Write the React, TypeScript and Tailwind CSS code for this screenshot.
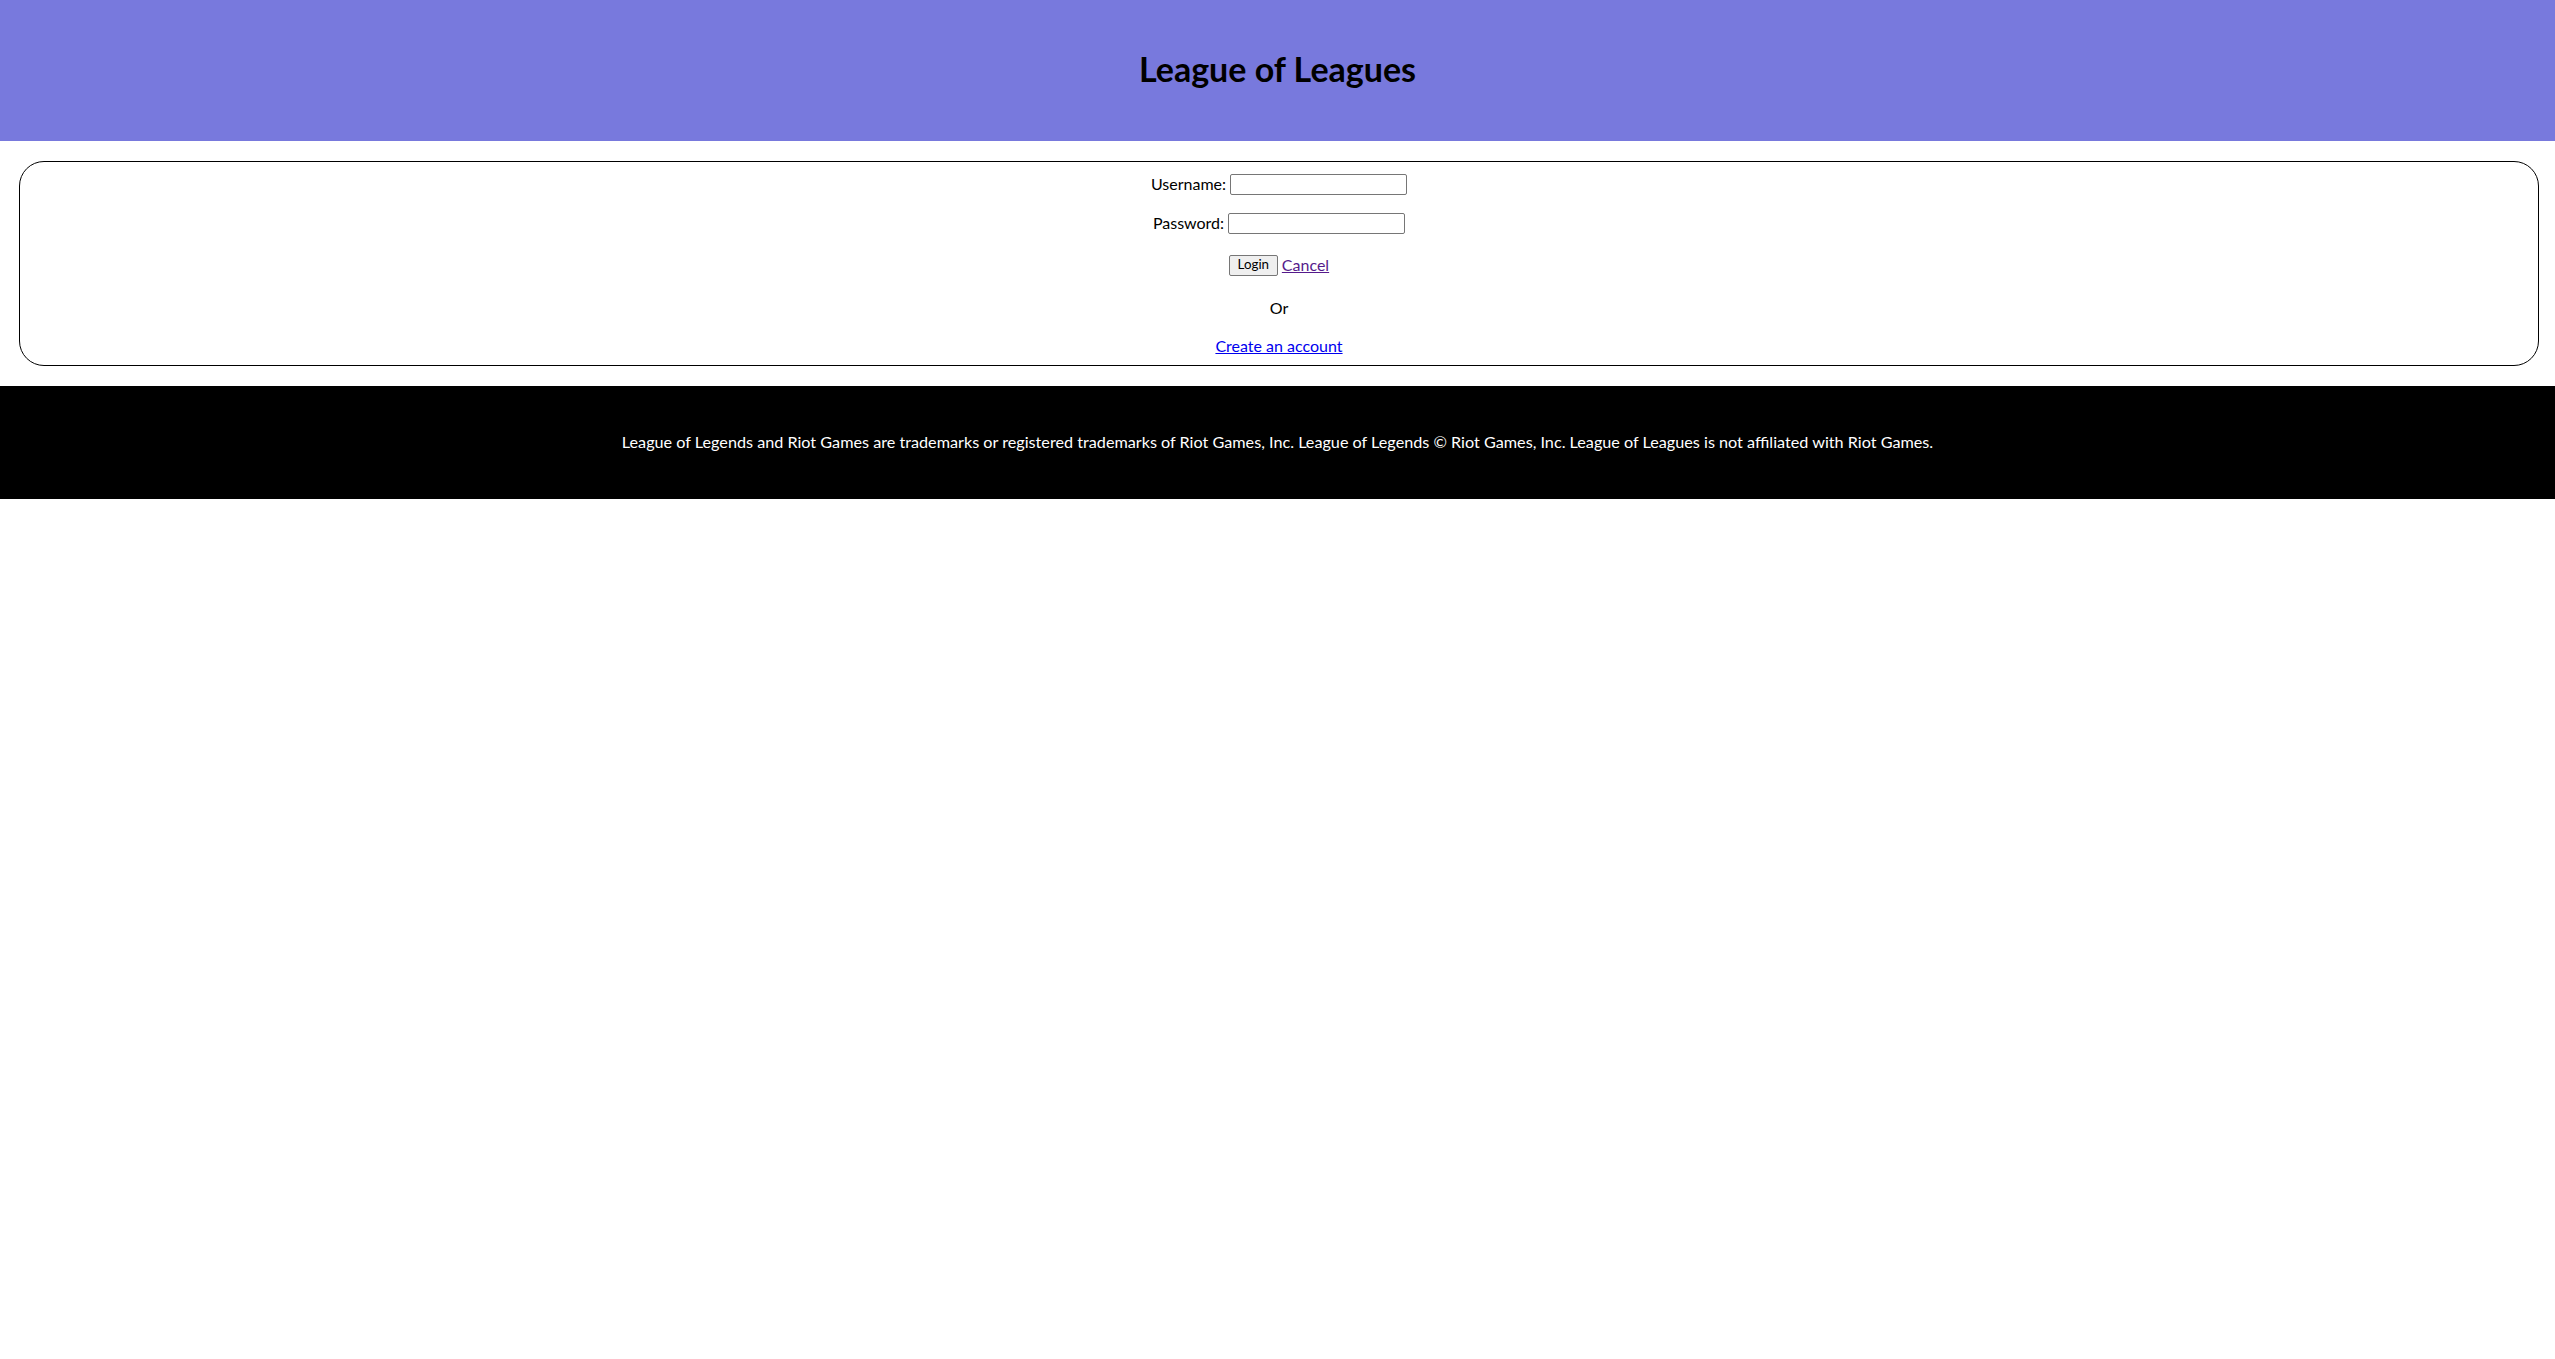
export default function App() {
  return (
    <div className="min-h-screen bg-white text-black" style={{ fontFamily: 'Lato, "Noto Sans", sans-serif' }}>
      <header className="flex h-[141px] items-center justify-center bg-[#7879dd] pb-[3px]">
        <h1 className="text-[34px] font-bold leading-none">League of Leagues</h1>
      </header>

      <main className="ml-[19px] mr-[16px] mt-[20px] rounded-[25px] border border-black pt-[11px] pb-[8px] text-[16px]">
        <div className="flex h-[22px] items-center justify-center gap-[4px]">
          <label htmlFor="username">Username:</label>
          <input id="username" type="text" className="h-[21px] w-[177px] rounded-[2px] border border-[#767676] bg-white px-[2px]" />
        </div>
        <div className="mt-[17px] flex h-[22px] items-center justify-center gap-[4px]">
          <label htmlFor="password">Password:</label>
          <input id="password" type="password" className="h-[21px] w-[177px] rounded-[2px] border border-[#767676] bg-white px-[2px]" />
        </div>
        <div className="mt-[20px] flex h-[22px] items-center justify-center gap-[4px]">
          <button className="h-[21px] w-[49px] rounded-[2px] border border-[#767676] bg-[#efefef] text-[13.33px] leading-none">
            Login
          </button>
          <a href="#" className="text-[#551a8b] underline">Cancel</a>
        </div>
        <p className="mt-[21px] h-[22px] text-center leading-[22px]">Or</p>
        <p className="mt-[16px] h-[22px] text-center leading-[22px]">
          <a href="#" className="text-[#0000ee] underline">Create an account</a>
        </p>
      </main>

      <footer className="mt-[20px] flex h-[113px] items-center justify-center bg-black text-[16.2px] text-white">
        <p>
          League of Legends and Riot Games are trademarks or registered trademarks of Riot Games, Inc. League of Legends © Riot Games, Inc. League of Leagues is not affiliated with Riot Games.
        </p>
      </footer>
    </div>
  );
}
